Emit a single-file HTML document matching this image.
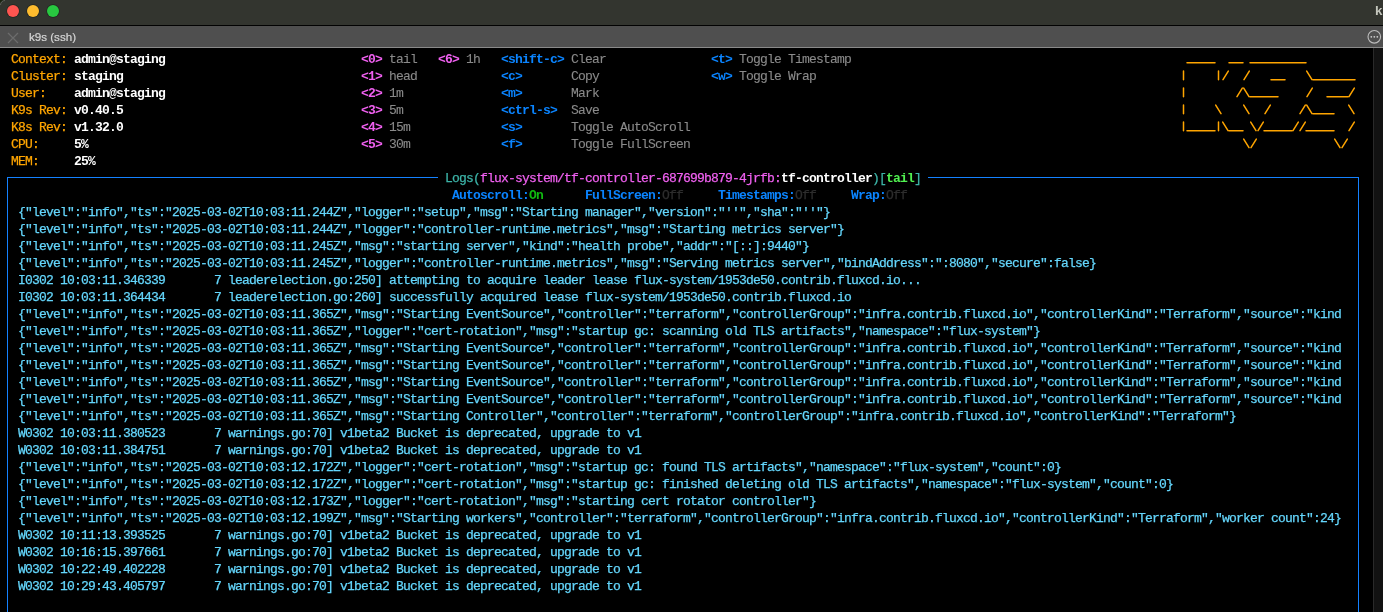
<!DOCTYPE html>
<html><head><meta charset="utf-8"><style>
*{margin:0;padding:0;box-sizing:border-box}
html,body{width:1383px;height:612px;overflow:hidden;background:#000}
body{position:relative;font-family:"Liberation Mono",monospace}
#term{position:absolute;left:0;top:0;width:1383px;height:612px;will-change:transform}
#titlebar{position:absolute;left:0;top:0;width:1383px;height:25px;background:#33352f}
#sep1{position:absolute;left:0;top:25px;width:1383px;height:1px;background:#020202}
#tabbar{position:absolute;left:0;top:26px;width:1383px;height:21px;background:#4f4f4f}
#sep2{position:absolute;left:0;top:47px;width:1383px;height:1px;background:#8a8a8a}
.dot{position:absolute;top:4.8px;width:12px;height:12px;border-radius:50%;box-shadow:0 0 0 0.7px rgba(10,20,15,0.45)}
#tabtitle{position:absolute;left:28.6px;top:28.8px;-webkit-text-stroke:0.2px currentColor;font-family:"Liberation Sans",sans-serif;font-size:11.6px;will-change:transform;color:#d6d6d6;line-height:16px}
#wintitle{position:absolute;left:1375.3px;will-change:transform;top:2.4px;font-family:"Liberation Sans",sans-serif;font-weight:bold;font-size:13.4px;color:#c4c6bd;line-height:18px}
#scroll{position:absolute;left:1373px;top:48px;width:10px;height:564px;background:#121212;border-left:1px solid #2a2a2a}
.t{position:absolute;white-space:pre;font-size:13.0px;letter-spacing:-0.8013px;line-height:17px;height:17px;margin-top:1px;-webkit-text-stroke:0.25px currentColor}
.lab{color:#ffa500}
.val{color:#ffffff;font-weight:bold;-webkit-text-stroke:0}
.nk{color:#f060f0;font-weight:bold;-webkit-text-stroke:0}
.ky{color:#0a84ff;font-weight:bold;-webkit-text-stroke:0}
.md{color:#8a8a8a;-webkit-text-stroke:0.1px currentColor}
.logo{color:#ffa500}
.log{color:#64d6fc}
.sb{color:#0a84ff;font-weight:bold;-webkit-text-stroke:0}
.on{color:#10bb10;font-weight:bold;-webkit-text-stroke:0}
.off{color:#2e2e2e}
.tt{color:#3cb4a8}
.tm{color:#f060f0}
.tw{color:#ffffff;font-weight:bold;-webkit-text-stroke:0}
.tg{color:#50f050;font-weight:bold;-webkit-text-stroke:0}
#fl{position:absolute;left:7px;top:177px;width:1px;height:435px;background:#1482ff}
#fr{position:absolute;left:1358px;top:177px;width:1px;height:435px;background:#1482ff}
#ft1{position:absolute;left:7px;top:177px;width:431px;height:1px;background:#1482ff}
#ft2{position:absolute;left:928px;top:177px;width:431px;height:1px;background:#1482ff}
</style></head><body>
<div id="titlebar"></div><svg style="position:absolute;left:0;top:0" width="8" height="8"><path d="M0 0H5A5 5 0 0 0 0 5Z" fill="#1a2410"/><path d="M5 0.5A4.5 4.5 0 0 0 0.5 5" stroke="#5c5e58" stroke-width="1" fill="none"/></svg><div id="sep1"></div><div id="tabbar"></div><div id="sep2"></div>
<div class="dot" style="left:7px;background:#fe5550"></div>
<div class="dot" style="left:27px;background:#febc2e"></div>
<div class="dot" style="left:47px;background:#28c840"></div>
<svg style="position:absolute;left:7px;top:31.7px" width="12" height="12" viewBox="0 0 12 12"><path d="M1 1L11 11M11 1L1 11" stroke="#6c6c6c" stroke-width="1.3"/></svg>
<div id="tabtitle">k9s (ssh)</div>
<div id="wintitle">k</div>
<svg style="position:absolute;left:1366px;top:29px" width="17" height="17" viewBox="0 0 17 17"><circle cx="8.3" cy="7.8" r="6.3" fill="none" stroke="#bdbdbd" stroke-width="1.1"/><circle cx="5.3" cy="7.8" r="0.9" fill="#ccc"/><circle cx="8.3" cy="7.8" r="0.9" fill="#ccc"/><circle cx="11.3" cy="7.8" r="0.9" fill="#ccc"/></svg>
<div id="scroll"></div>
<svg style="position:absolute;left:0;top:0" width="1383" height="612"><path d="M1187.0 62.8H1194.0M1194.0 62.8H1201.0M1201.0 62.8H1208.0M1208.0 62.8H1215.0M1229.0 62.8H1236.0M1236.0 62.8H1243.0M1250.0 62.8H1257.0M1257.0 62.8H1264.0M1264.0 62.8H1271.0M1271.0 62.8H1278.0M1278.0 62.8H1285.0M1285.0 62.8H1292.0M1292.0 62.8H1299.0M1299.0 62.8H1306.0M1183.5 71.0V79.8M1218.5 71.0V79.8M1223.0 79.7L1228.3 71.1M1244.0 79.7L1249.3 71.1M1271.0 79.8H1278.0M1278.0 79.8H1285.0M1306.7 71.1L1312.0 79.7M1313.0 79.8H1320.0M1320.0 79.8H1327.0M1327.0 79.8H1334.0M1334.0 79.8H1341.0M1341.0 79.8H1348.0M1348.0 79.8H1355.0M1183.5 88.0V96.8M1237.0 96.7L1242.3 88.1M1243.7 88.1L1249.0 96.7M1250.0 96.8H1257.0M1257.0 96.8H1264.0M1264.0 96.8H1271.0M1271.0 96.8H1278.0M1307.0 96.7L1312.3 88.1M1327.0 96.8H1334.0M1334.0 96.8H1341.0M1341.0 96.8H1348.0M1349.0 96.7L1354.3 88.1M1183.5 105.0V113.8M1215.7 105.1L1221.0 113.7M1243.7 105.1L1249.0 113.7M1265.0 113.7L1270.3 105.1M1300.0 113.7L1305.3 105.1M1306.7 105.1L1312.0 113.7M1313.0 113.8H1320.0M1320.0 113.8H1327.0M1327.0 113.8H1334.0M1348.7 105.1L1354.0 113.7M1183.5 122.0V130.8M1187.0 130.8H1194.0M1194.0 130.8H1201.0M1201.0 130.8H1208.0M1208.0 130.8H1215.0M1218.5 122.0V130.8M1222.7 122.1L1228.0 130.7M1229.0 130.8H1236.0M1236.0 130.8H1243.0M1250.7 122.1L1256.0 130.7M1258.0 130.7L1263.3 122.1M1264.0 130.8H1271.0M1271.0 130.8H1278.0M1278.0 130.8H1285.0M1285.0 130.8H1292.0M1293.0 130.7L1298.3 122.1M1300.0 130.7L1305.3 122.1M1306.0 130.8H1313.0M1313.0 130.8H1320.0M1320.0 130.8H1327.0M1327.0 130.8H1334.0M1349.0 130.7L1354.3 122.1M1243.7 139.1L1249.0 147.7M1251.0 147.7L1256.3 139.1M1334.7 139.1L1340.0 147.7M1342.0 147.7L1347.3 139.1" stroke="#ffa500" stroke-width="1.5" fill="none" stroke-linecap="round"/></svg>
<div id="fl"></div><div id="fr"></div><div id="ft1"></div><div id="ft2"></div>
<div id="term"><div class="t lab" style="left:11.00px;top:50px">Context:</div><div class="t val" style="left:74.00px;top:50px">admin@staging</div><div class="t lab" style="left:11.00px;top:67px">Cluster:</div><div class="t val" style="left:74.00px;top:67px">staging</div><div class="t lab" style="left:11.00px;top:84px">User:</div><div class="t val" style="left:74.00px;top:84px">admin@staging</div><div class="t lab" style="left:11.00px;top:101px">K9s Rev:</div><div class="t val" style="left:74.00px;top:101px">v0.40.5</div><div class="t lab" style="left:11.00px;top:118px">K8s Rev:</div><div class="t val" style="left:74.00px;top:118px">v1.32.0</div><div class="t lab" style="left:11.00px;top:135px">CPU:</div><div class="t val" style="left:74.00px;top:135px">5%</div><div class="t lab" style="left:11.00px;top:152px">MEM:</div><div class="t val" style="left:74.00px;top:152px">25%</div><div class="t nk" style="left:361.00px;top:50px">&lt;0&gt;</div><div class="t md" style="left:389.00px;top:50px">tail</div><div class="t nk" style="left:361.00px;top:67px">&lt;1&gt;</div><div class="t md" style="left:389.00px;top:67px">head</div><div class="t nk" style="left:361.00px;top:84px">&lt;2&gt;</div><div class="t md" style="left:389.00px;top:84px">1m</div><div class="t nk" style="left:361.00px;top:101px">&lt;3&gt;</div><div class="t md" style="left:389.00px;top:101px">5m</div><div class="t nk" style="left:361.00px;top:118px">&lt;4&gt;</div><div class="t md" style="left:389.00px;top:118px">15m</div><div class="t nk" style="left:361.00px;top:135px">&lt;5&gt;</div><div class="t md" style="left:389.00px;top:135px">30m</div><div class="t nk" style="left:438.00px;top:50px">&lt;6&gt;</div><div class="t md" style="left:466.00px;top:50px">1h</div><div class="t ky" style="left:501.00px;top:50px">&lt;shift-c&gt;</div><div class="t md" style="left:571.00px;top:50px">Clear</div><div class="t ky" style="left:501.00px;top:67px">&lt;c&gt;</div><div class="t md" style="left:571.00px;top:67px">Copy</div><div class="t ky" style="left:501.00px;top:84px">&lt;m&gt;</div><div class="t md" style="left:571.00px;top:84px">Mark</div><div class="t ky" style="left:501.00px;top:101px">&lt;ctrl-s&gt;</div><div class="t md" style="left:571.00px;top:101px">Save</div><div class="t ky" style="left:501.00px;top:118px">&lt;s&gt;</div><div class="t md" style="left:571.00px;top:118px">Toggle AutoScroll</div><div class="t ky" style="left:501.00px;top:135px">&lt;f&gt;</div><div class="t md" style="left:571.00px;top:135px">Toggle FullScreen</div><div class="t ky" style="left:711.00px;top:50px">&lt;t&gt;</div><div class="t md" style="left:739.00px;top:50px">Toggle Timestamp</div><div class="t ky" style="left:711.00px;top:67px">&lt;w&gt;</div><div class="t md" style="left:739.00px;top:67px">Toggle Wrap</div><div class="t log" style="left:18.00px;top:203px">{"level":"info","ts":"2025-03-02T10:03:11.244Z","logger":"setup","msg":"Starting manager","version":"''","sha":"''"}</div><div class="t log" style="left:18.00px;top:220px">{"level":"info","ts":"2025-03-02T10:03:11.244Z","logger":"controller-runtime.metrics","msg":"Starting metrics server"}</div><div class="t log" style="left:18.00px;top:237px">{"level":"info","ts":"2025-03-02T10:03:11.245Z","msg":"starting server","kind":"health probe","addr":"[::]:9440"}</div><div class="t log" style="left:18.00px;top:254px">{"level":"info","ts":"2025-03-02T10:03:11.245Z","logger":"controller-runtime.metrics","msg":"Serving metrics server","bindAddress":":8080","secure":false}</div><div class="t log" style="left:18.00px;top:271px">I0302 10:03:11.346339       7 leaderelection.go:250] attempting to acquire leader lease flux-system/1953de50.contrib.fluxcd.io...</div><div class="t log" style="left:18.00px;top:288px">I0302 10:03:11.364434       7 leaderelection.go:260] successfully acquired lease flux-system/1953de50.contrib.fluxcd.io</div><div class="t log" style="left:18.00px;top:305px">{"level":"info","ts":"2025-03-02T10:03:11.365Z","msg":"Starting EventSource","controller":"terraform","controllerGroup":"infra.contrib.fluxcd.io","controllerKind":"Terraform","source":"kind</div><div class="t log" style="left:18.00px;top:322px">{"level":"info","ts":"2025-03-02T10:03:11.365Z","logger":"cert-rotation","msg":"startup gc: scanning old TLS artifacts","namespace":"flux-system"}</div><div class="t log" style="left:18.00px;top:339px">{"level":"info","ts":"2025-03-02T10:03:11.365Z","msg":"Starting EventSource","controller":"terraform","controllerGroup":"infra.contrib.fluxcd.io","controllerKind":"Terraform","source":"kind</div><div class="t log" style="left:18.00px;top:356px">{"level":"info","ts":"2025-03-02T10:03:11.365Z","msg":"Starting EventSource","controller":"terraform","controllerGroup":"infra.contrib.fluxcd.io","controllerKind":"Terraform","source":"kind</div><div class="t log" style="left:18.00px;top:373px">{"level":"info","ts":"2025-03-02T10:03:11.365Z","msg":"Starting EventSource","controller":"terraform","controllerGroup":"infra.contrib.fluxcd.io","controllerKind":"Terraform","source":"kind</div><div class="t log" style="left:18.00px;top:390px">{"level":"info","ts":"2025-03-02T10:03:11.365Z","msg":"Starting EventSource","controller":"terraform","controllerGroup":"infra.contrib.fluxcd.io","controllerKind":"Terraform","source":"kind</div><div class="t log" style="left:18.00px;top:407px">{"level":"info","ts":"2025-03-02T10:03:11.365Z","msg":"Starting Controller","controller":"terraform","controllerGroup":"infra.contrib.fluxcd.io","controllerKind":"Terraform"}</div><div class="t log" style="left:18.00px;top:424px">W0302 10:03:11.380523       7 warnings.go:70] v1beta2 Bucket is deprecated, upgrade to v1</div><div class="t log" style="left:18.00px;top:441px">W0302 10:03:11.384751       7 warnings.go:70] v1beta2 Bucket is deprecated, upgrade to v1</div><div class="t log" style="left:18.00px;top:458px">{"level":"info","ts":"2025-03-02T10:03:12.172Z","logger":"cert-rotation","msg":"startup gc: found TLS artifacts","namespace":"flux-system","count":0}</div><div class="t log" style="left:18.00px;top:475px">{"level":"info","ts":"2025-03-02T10:03:12.172Z","logger":"cert-rotation","msg":"startup gc: finished deleting old TLS artifacts","namespace":"flux-system","count":0}</div><div class="t log" style="left:18.00px;top:492px">{"level":"info","ts":"2025-03-02T10:03:12.173Z","logger":"cert-rotation","msg":"starting cert rotator controller"}</div><div class="t log" style="left:18.00px;top:509px">{"level":"info","ts":"2025-03-02T10:03:12.199Z","msg":"Starting workers","controller":"terraform","controllerGroup":"infra.contrib.fluxcd.io","controllerKind":"Terraform","worker count":24}</div><div class="t log" style="left:18.00px;top:526px">W0302 10:11:13.393525       7 warnings.go:70] v1beta2 Bucket is deprecated, upgrade to v1</div><div class="t log" style="left:18.00px;top:543px">W0302 10:16:15.397661       7 warnings.go:70] v1beta2 Bucket is deprecated, upgrade to v1</div><div class="t log" style="left:18.00px;top:560px">W0302 10:22:49.402228       7 warnings.go:70] v1beta2 Bucket is deprecated, upgrade to v1</div><div class="t log" style="left:18.00px;top:577px">W0302 10:29:43.405797       7 warnings.go:70] v1beta2 Bucket is deprecated, upgrade to v1</div><div class="t sb" style="left:452.00px;top:186px">Autoscroll:</div><div class="t on" style="left:529.00px;top:186px">On</div><div class="t sb" style="left:585.00px;top:186px">FullScreen:</div><div class="t off" style="left:662.00px;top:186px">Off</div><div class="t sb" style="left:718.00px;top:186px">Timestamps:</div><div class="t off" style="left:795.00px;top:186px">Off</div><div class="t sb" style="left:851.00px;top:186px">Wrap:</div><div class="t off" style="left:886.00px;top:186px">Off</div><div class="t tt" style="left:445.00px;top:169px">Logs(</div><div class="t tm" style="left:480.00px;top:169px">flux-system/tf-controller-687699b879-4jrfb:</div><div class="t tw" style="left:781.00px;top:169px">tf-controller</div><div class="t tt" style="left:872.00px;top:169px">)[</div><div class="t tg" style="left:886.00px;top:169px">tail</div><div class="t tt" style="left:914.00px;top:169px">]</div></div>
</body></html>
